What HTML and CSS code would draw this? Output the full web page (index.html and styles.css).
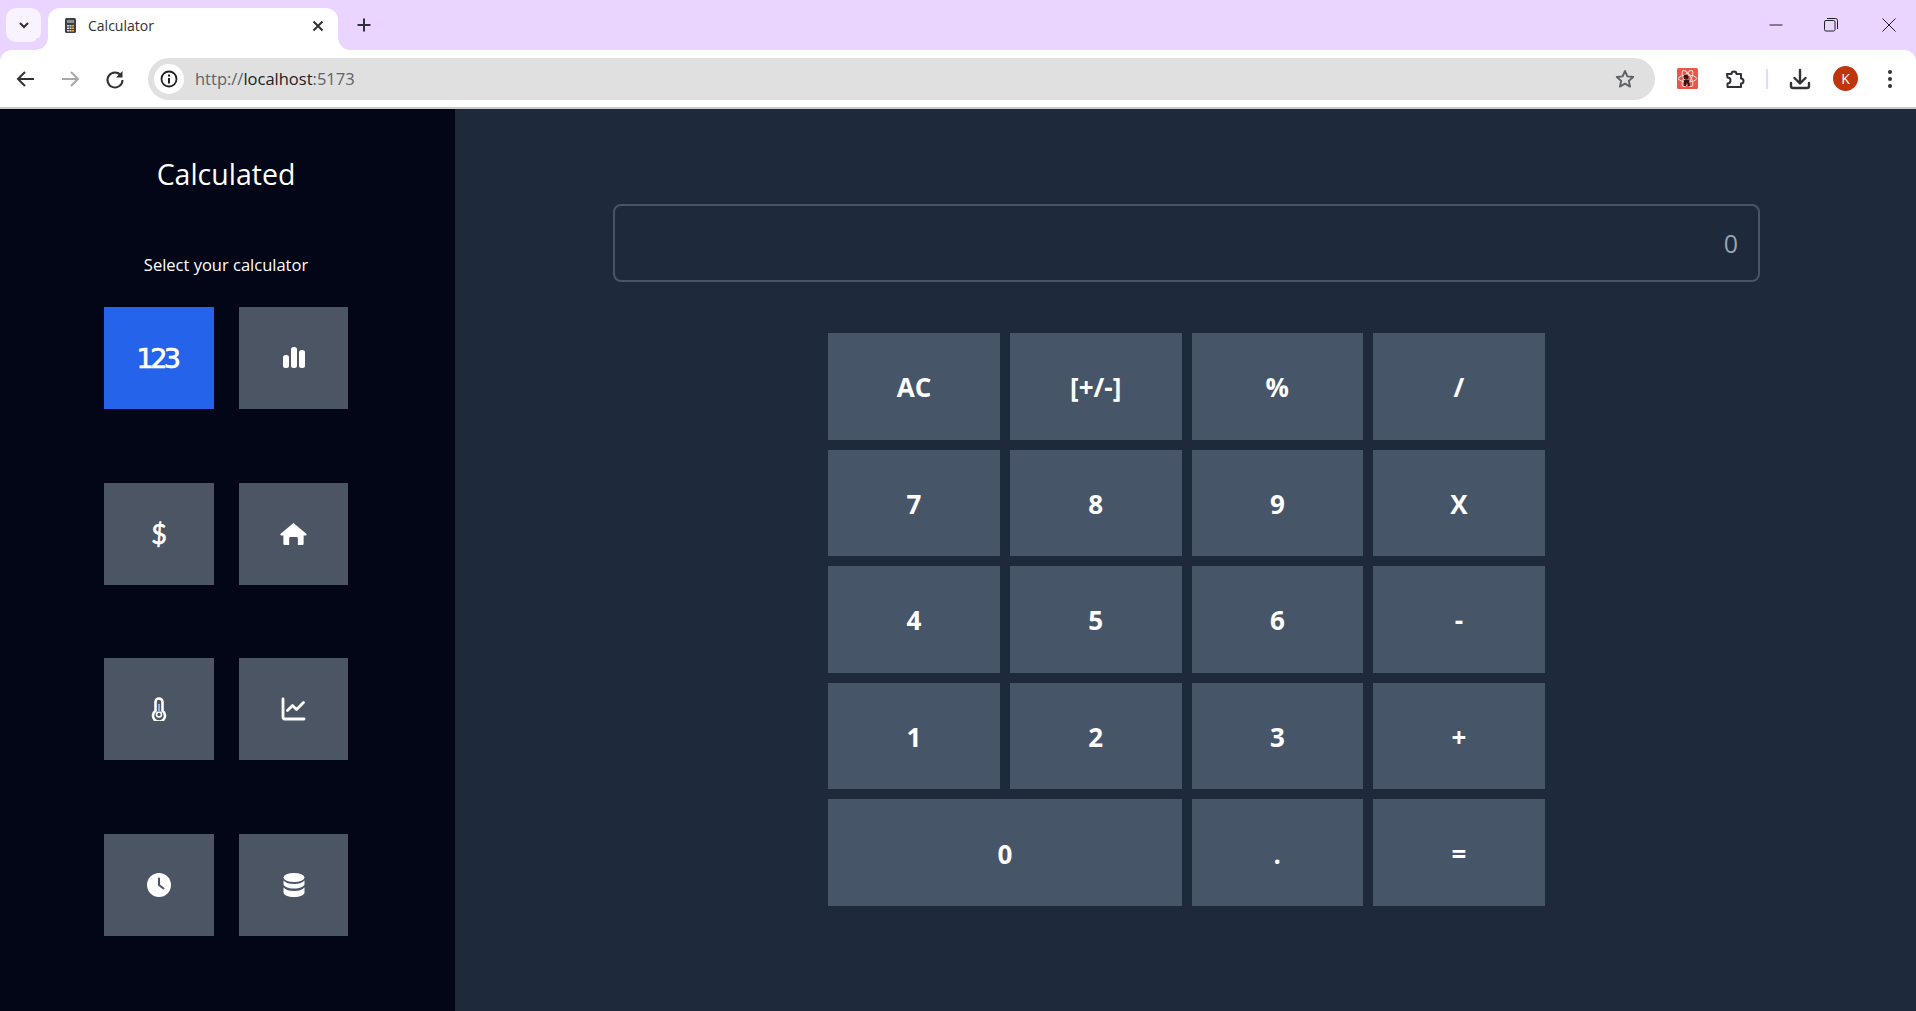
FILE: index.html
```html
<!DOCTYPE html>
<html lang="en">
<head>
<meta charset="utf-8">
<title>Calculator</title>
<link rel="stylesheet" href="styles.css">
</head>
<body>
<header class="browser">
  <div class="tabstrip">
    <div class="tabsearch"><svg class="ico12" viewBox="0 0 12 12"><path d="M2 4l4 4 4-4" class="st2"/></svg></div>
    <div class="tab">
      <svg class="favicon" viewBox="0 0 11 15"><rect width="11" height="15" rx="1.5" fill="#3c4043"/><rect x="2" y="2" width="7" height="3" fill="#8a8f94"/><path d="M2 7h2v1.5H2zM4.500 7h2v1.500h-2zM2 9.500h2V11H2zM4.500 9.500h2V11h-2zM2 12h2v1.500H2zM4.500 12h2v1.500h-2z" fill="#dadce0"/><path d="M7 7h2v1.500H7zM7 9.500h2V11H7zM7 12h2v1.500H7z" fill="#e8a33d"/></svg>
      <span class="tabtitle">Calculator</span>
      <svg class="tabclose" viewBox="0 0 12 12"><path d="M1.500 1.500l9 9M10.500 1.500l-9 9" class="st2"/></svg>
    </div>
    <svg class="newtab" viewBox="0 0 14 14"><path d="M7 .5v13M.5 7h13" class="st2"/></svg>
    <div class="winctl">
      <svg class="winbtn" viewBox="0 0 14 14"><path d="M.5 7h13" class="st1"/></svg>
      <svg class="winbtn restore" viewBox="0 0 14 14"><rect x=".5" y="2.500" width="10.500" height="10.500" rx="1.500" class="st1"/><path d="M3 .5h8.500a2 2 0 0 1 2 2V11" class="st1"/></svg>
      <svg class="winbtn" viewBox="0 0 14 14"><path d="M.5.5l13 13M13.500.5l-13 13" class="st1"/></svg>
    </div>
  </div>
  <div class="toolbar">
    <svg class="tbicon" viewBox="0 0 36 36"><path d="M27 18H11M18 11l-7 7 7 7" class="st2"/></svg>
    <svg class="tbicon muted" viewBox="0 0 36 36"><path d="M10 18h15M19 11l7 7-7 7" class="st2"/></svg>
    <svg class="tbicon" viewBox="0 0 36 36"><path d="M24 14.500A7.500 7.500 0 1 0 25.500 19" class="st2"/><path d="M25.500 10v6.500H19z" fill="#303134"/></svg>
    <div class="omnibox">
      <div class="siteinfo"><svg class="infoicon" viewBox="0 0 18 18"><circle cx="9" cy="9" r="7.500" fill="none" stroke="#202124" stroke-width="1.800"/><path d="M8 8h2v5.500H8zM8 4.500h2v2H8z" fill="#202124"/></svg></div>
      <span class="url"><span class="urlmuted">http://</span>localhost<span class="urlmuted">:5173</span></span>
      <svg class="star" viewBox="0 0 20 20"><path d="M10 2l2.400 5.400 5.800.6-4.400 3.900 1.300 5.700L10 14.700l-5.100 2.900 1.300-5.700L1.800 8l5.800-.6z" fill="none" stroke="#5f6368" stroke-width="1.900" stroke-linejoin="round"/></svg>
    </div>
    <div class="extapp">
      <svg class="extbadge" viewBox="0 0 21 21"><rect width="21" height="21" rx="1.500" fill="#e8574a"/><g fill="none" stroke="#ffd9d4" stroke-width="1"><ellipse cx="10.500" cy="10.500" rx="9" ry="3.500"/><ellipse cx="10.500" cy="10.500" rx="9" ry="3.500" transform="rotate(60 10.500 10.500)"/><ellipse cx="10.500" cy="10.500" rx="9" ry="3.500" transform="rotate(120 10.500 10.500)"/></g><circle cx="9" cy="9" r="2.500" fill="#3a1512"/><path d="M7 12h5l1 6h-2l-1-3-1 3H7z" fill="#3a1512"/></svg>
    </div>
    <svg class="tbicon puzzle" viewBox="0 0 36 36"><path d="M11 13h4.500a2.500 2.500 0 0 1 5 0H25v4.500a2.500 2.500 0 0 1 0 5V26H11.500v-3.500a3 3 0 0 0 0-6z" fill="none" stroke="#303134" stroke-width="2" stroke-linejoin="round"/></svg>
    <span class="tbsep"></span>
    <svg class="tbicon download" viewBox="0 0 36 36"><path d="M18 9v13M12.500 17l5.500 5.500 5.500-5.500" class="st2a"/><path d="M9 22v3a2 2 0 0 0 2 2h14a2 2 0 0 0 2-2v-3" class="st2a"/></svg>
    <div class="avatar">K</div>
    <svg class="tbicon dots" viewBox="0 0 36 36"><circle cx="18" cy="11" r="2" fill="#303134"/><circle cx="18" cy="18" r="2" fill="#303134"/><circle cx="18" cy="25" r="2" fill="#303134"/></svg>
  </div>
</header>

<div class="app">
  <aside class="sidebar">
    <h1 class="brand">Calculated</h1>
    <p class="subtitle">Select your calculator</p>
    <nav class="picker">
      <button class="pick active"><span class="pick123">123</span></button>
      <button class="pick"><svg class="pickicon" viewBox="0 0 24 24"><rect x="1" y="9" width="6" height="13" rx="2.500"/><rect x="9" y="1" width="6" height="21" rx="2.500"/><rect x="17" y="4" width="6" height="18" rx="2.500"/></svg></button>
      <button class="pick"><span class="pickdollar">$</span></button>
      <button class="pick"><svg class="pickicon wide" viewBox="0 0 28 24"><path d="M14 .5l13.300 11.300c.6.500.5 1.700-.6 1.700H24.500V22a1.500 1.500 0 0 1-1.500 1.500h-4.500V16.500a1.500 1.500 0 0 0-1.500-1.500h-6a1.500 1.500 0 0 0-1.500 1.500v7H5A1.500 1.500 0 0 1 3.500 22v-8.500H1.300c-1.100 0-1.200-1.200-.6-1.700z"/></svg></button>
      <button class="pick"><svg class="pickicon" viewBox="0 0 24 24"><path d="M12 1.500a3.500 3.500 0 0 0-3.500 3.500v8.800a6 6 0 1 0 7 0V5A3.500 3.500 0 0 0 12 1.500z" fill="none" stroke="#fff" stroke-width="2.600"/><circle cx="12" cy="17.500" r="2.500" fill="none" stroke="#fff" stroke-width="1.600"/><path d="M12 7v8" stroke="#7fb4e8" stroke-width="2"/></svg></button>
      <button class="pick"><svg class="pickicon wide" viewBox="0 0 24 24"><path d="M1.500 2v18a2 2 0 0 0 2 2h19" fill="none" stroke="#fff" stroke-width="2.800" stroke-linecap="round"/><path d="M6 13.500l5-5 4 4 7-7" fill="none" stroke="#fff" stroke-width="2.800" stroke-linecap="round" stroke-linejoin="round"/></svg></button>
      <button class="pick"><svg class="pickicon" viewBox="0 0 24 24"><circle cx="12" cy="12" r="12"/><path d="M12 5.500V12l4.500 3.500" fill="none" stroke="#4b5563" stroke-width="2" stroke-linecap="round"/></svg></button>
      <button class="pick"><svg class="pickicon" viewBox="0 0 24 24"><ellipse cx="12" cy="4.500" rx="10.500" ry="4.500"/><path d="M1.500 7.500v3.500c0 2.500 4.700 4.500 10.500 4.500s10.500-2 10.500-4.500V7.500c-2 2.500-6 3.500-10.500 3.500S3.500 10 1.500 7.500z"/><path d="M1.500 14.500V19.500c0 2.500 4.700 4.500 10.500 4.500s10.500-2 10.500-4.500v-5c-2 2.500-6 3.500-10.500 3.500s-8.500-1-10.500-3.500z"/></svg></button>
    </nav>
  </aside>
  <main class="calc">
    <div class="display">0</div>
    <div class="keys">
      <button class="key">AC</button>
      <button class="key">[+/-]</button>
      <button class="key">%</button>
      <button class="key">/</button>
      <button class="key">7</button>
      <button class="key">8</button>
      <button class="key">9</button>
      <button class="key">X</button>
      <button class="key">4</button>
      <button class="key">5</button>
      <button class="key">6</button>
      <button class="key">-</button>
      <button class="key">1</button>
      <button class="key">2</button>
      <button class="key">3</button>
      <button class="key">+</button>
      <button class="key span2">0</button>
      <button class="key">.</button>
      <button class="key">=</button>
    </div>
  </main>
</div>
</body>
</html>
```
FILE: styles.css
```css
* { box-sizing: border-box; }
html, body { margin: 0; height: 100%; overflow: hidden; }
body {
  display: flex;
  flex-direction: column;
  font-family: "Open Sans", "Liberation Sans", sans-serif;
  background: #1e293b;
}
.st1 { fill: none; stroke: #202124; stroke-width: 1; }
.st2 { fill: none; stroke: #303134; stroke-width: 2; }
.st2a { fill: none; stroke: #303134; stroke-width: 2.4; stroke-linecap: round; stroke-linejoin: round; }

/* Browser chrome */
.browser { flex: none; background: #e9d5ff; }
.tabstrip { height: 50px; display: flex; align-items: flex-start; padding: 8px 0 0 6px; }
.tabsearch {
  width: 35px; height: 34px; background: #f9f3ff; border-radius: 10px;
  display: flex; align-items: center; justify-content: center;
}
.ico12 { width: 12px; height: 12px; }
.tab {
  position: relative;
  width: 290px; height: 42px; margin-left: 7px; padding: 0 14px 7px 17px;
  background: #fff; border-radius: 12px 12px 0 0;
  display: flex; align-items: center; gap: 12px;
}
.tab::before, .tab::after {
  content: ""; position: absolute; bottom: 0; width: 12px; height: 12px;
}
.tab::before { left: -12px; background: radial-gradient(circle at 0 0, #e9d5ff 11.500px, #fff 12px); }
.tab::after { right: -12px; background: radial-gradient(circle at 100% 0, #e9d5ff 11.500px, #fff 12px); }
.favicon { width: 11px; height: 15px; flex: none; }
.tabtitle { flex: 1; font-size: 14px; color: #303134; }
.tabclose { width: 12px; height: 12px; flex: none; }
.newtab { width: 14px; height: 14px; margin: 10px 0 0 19px; }
.winctl { margin-left: auto; display: flex; gap: 41px; padding: 10px 20px 0 0; }
.winbtn { width: 14px; height: 14px; }
.restore { margin-right: 3px; }

.toolbar {
  height: 59px; background: #fff; border-radius: 12px 12px 0 0;
  border-bottom: 2px solid #c9c9c9;
  display: flex; align-items: center; padding: 0 8px 0 7px;
}
.tbicon { width: 36px; height: 36px; flex: none; margin-right: 9px; }
.muted { opacity: .42; }
.omnibox {
  flex: 1; height: 42px; margin: 0 14px 0 6px; padding: 0 20px 0 6px;
  background: #e0e0e0; border-radius: 21px;
  display: flex; align-items: center;
}
.siteinfo {
  width: 30px; height: 30px; border-radius: 50%; background: #fff;
  display: flex; align-items: center; justify-content: center; flex: none;
}
.infoicon { width: 18px; height: 18px; }
.url { flex: 1; margin-left: 11px; font-size: 16.500px; color: #202124; }
.urlmuted { color: #5f6368; }
.star { width: 20px; height: 20px; }
.extapp { width: 21px; height: 21px; margin: 0 18px 0 8px; flex: none; }
.extbadge { display: block; width: 21px; height: 21px; }
.puzzle { margin-right: 14px; }
.tbsep { width: 2px; height: 20px; background: #e9d5ff; margin-right: 14px; flex: none; }
.download { margin-right: 15px; }
.avatar {
  width: 25px; height: 25px; border-radius: 50%; background: #bf360c; color: #fff;
  font-size: 14px; display: flex; align-items: center; justify-content: center;
  flex: none; margin-right: 14px;
}
.dots { margin-right: 0; }

/* App */
.app { flex: 1; min-height: 0; display: grid; grid-template-columns: 455px 1fr; }
.sidebar { background: #020617; color: #fff; padding: 49px 3px 0 0; display: flex; flex-direction: column; align-items: center; }
.brand { margin: 0; font-size: 28.500px; font-weight: 400; line-height: 32px; }
.subtitle { margin: 63px 0 0; font-size: 16.500px; line-height: 24px; }
.picker {
  margin-top: 30px;
  display: grid; grid-template-columns: 110px 109px; grid-auto-rows: 102px;
  column-gap: 25px; row-gap: 73.500px;
}
.pick {
  border: 0; padding: 0; background: #4b5563; color: #fff;
  display: flex; align-items: center; justify-content: center;
}
.active { background: #2563eb; }
.pick123 {
  font: 400 27px "DejaVu Sans", sans-serif; letter-spacing: -3.500px;
  -webkit-text-stroke: .7px #fff; margin-left: -4px;
}
.pickdollar { font: 400 27px Lato, sans-serif; -webkit-text-stroke: .6px #fff; }
.pickicon { width: 24px; height: 24px; fill: #fff; }
.wide { width: 27px; }

.calc { padding: 95px 0 0 2px; display: flex; flex-direction: column; align-items: center; }
.display {
  width: 1147px; height: 78px; border: 2px solid #475569; border-radius: 8px;
  color: #94a3b8; font-size: 25px; text-align: right;
  padding: 0 20px; line-height: 75px;
  flex: none;
}
.keys {
  margin-top: 51px; width: 716.600px;
  display: grid; grid-template-columns: repeat(4, 1fr); grid-auto-rows: 106.600px; gap: 10px;
}
.key {
  border: 0; padding: 2px 0 0; background: #475569; color: #fff;
  font: 700 26px "Open Sans", "Liberation Sans", sans-serif;
}
.span2 { grid-column: span 2; }
```
